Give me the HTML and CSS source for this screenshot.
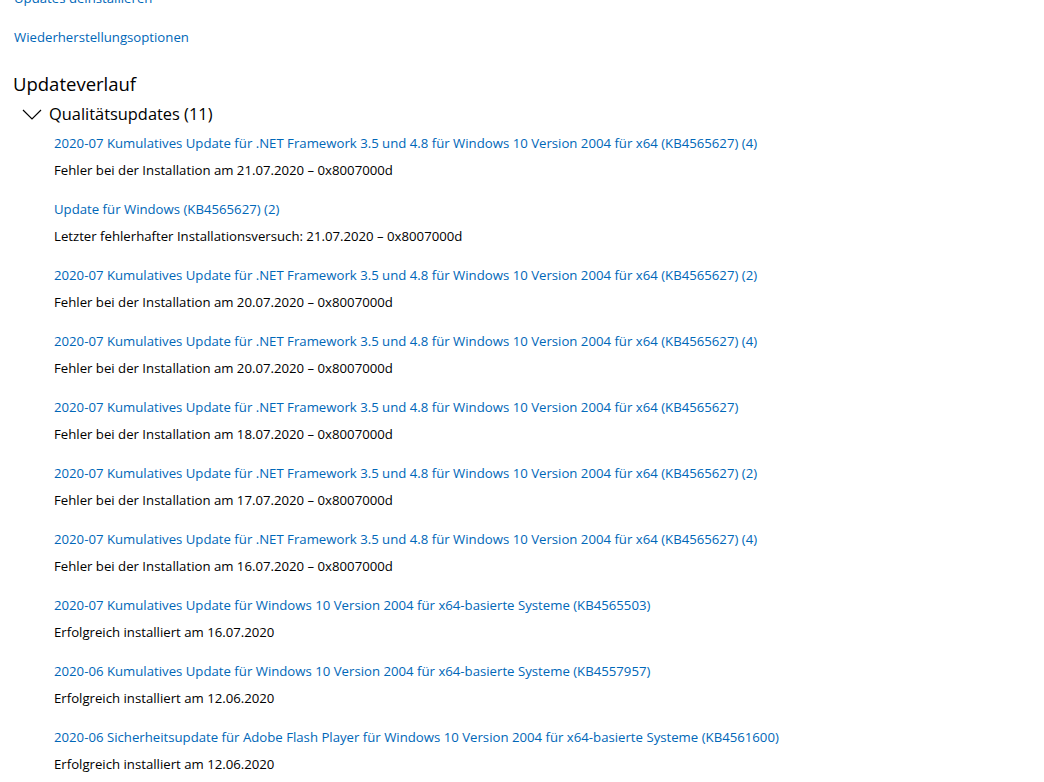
FILE: index.html
```html
<!DOCTYPE html>
<html lang="de">
<head>
    <meta charset="UTF-8">
    <title>Updateverlauf</title>
    <link rel="stylesheet" href="styles.css">
</head>
<body>
    <div class="page">
        <a href="#" class="top-link cut">Updates deinstallieren</a>
        <a href="#" class="top-link">Wiederherstellungsoptionen</a>

        <h1>Updateverlauf</h1>

        <div class="group">
            <div class="group-head">
                <svg class="chevron" width="20" height="11" viewBox="0 0 20 11">
                    <path d="M1 1 L10 10 L19 1" fill="none" stroke="#000" stroke-width="1.2"/>
                </svg>
                <span>Qualitätsupdates (11)</span>
            </div>

            <ul class="update-list">
                <li>
                    <a href="#">2020-07 Kumulatives Update für .NET Framework 3.5 und 4.8 für Windows 10 Version 2004 für x64 (KB4565627) (4)</a>
                    <p>Fehler bei der Installation am 21.07.2020 – 0x8007000d</p>
                </li>
                <li>
                    <a href="#">Update für Windows (KB4565627) (2)</a>
                    <p>Letzter fehlerhafter Installationsversuch: 21.07.2020 – 0x8007000d</p>
                </li>
                <li>
                    <a href="#">2020-07 Kumulatives Update für .NET Framework 3.5 und 4.8 für Windows 10 Version 2004 für x64 (KB4565627) (2)</a>
                    <p>Fehler bei der Installation am 20.07.2020 – 0x8007000d</p>
                </li>
                <li>
                    <a href="#">2020-07 Kumulatives Update für .NET Framework 3.5 und 4.8 für Windows 10 Version 2004 für x64 (KB4565627) (4)</a>
                    <p>Fehler bei der Installation am 20.07.2020 – 0x8007000d</p>
                </li>
                <li>
                    <a href="#">2020-07 Kumulatives Update für .NET Framework 3.5 und 4.8 für Windows 10 Version 2004 für x64 (KB4565627)</a>
                    <p>Fehler bei der Installation am 18.07.2020 – 0x8007000d</p>
                </li>
                <li>
                    <a href="#">2020-07 Kumulatives Update für .NET Framework 3.5 und 4.8 für Windows 10 Version 2004 für x64 (KB4565627) (2)</a>
                    <p>Fehler bei der Installation am 17.07.2020 – 0x8007000d</p>
                </li>
                <li>
                    <a href="#">2020-07 Kumulatives Update für .NET Framework 3.5 und 4.8 für Windows 10 Version 2004 für x64 (KB4565627) (4)</a>
                    <p>Fehler bei der Installation am 16.07.2020 – 0x8007000d</p>
                </li>
                <li>
                    <a href="#">2020-07 Kumulatives Update für Windows 10 Version 2004 für x64-basierte Systeme (KB4565503)</a>
                    <p>Erfolgreich installiert am 16.07.2020</p>
                </li>
                <li>
                    <a href="#">2020-06 Kumulatives Update für Windows 10 Version 2004 für x64-basierte Systeme (KB4557957)</a>
                    <p>Erfolgreich installiert am 12.06.2020</p>
                </li>
                <li>
                    <a href="#">2020-06 Sicherheitsupdate für Adobe Flash Player für Windows 10 Version 2004 für x64-basierte Systeme (KB4561600)</a>
                    <p>Erfolgreich installiert am 12.06.2020</p>
                </li>
            </ul>
        </div>
    </div>
</body>
</html>
```

FILE: styles.css
```css
* {
    margin: 0;
    padding: 0;
    box-sizing: border-box;
}

body {
    font-family: 'Open Sans', 'Noto Sans', sans-serif;
    font-size: 13.2px;
    color: #000;
    background-color: #fff;
    overflow: hidden;
}

.page {
    padding-left: 13px;
    margin-top: -12px;
}

.top-link {
    display: block;
    color: #0067b8;
    text-decoration: none;
    line-height: 20px;
    margin-left: 1px;
    margin-bottom: 21px;
}

.top-link.cut {
    margin-bottom: 19px;
}

h1 {
    font-weight: normal;
    font-size: 18.5px;
    line-height: 26px;
    margin-top: 24px;
}

.group-head {
    display: flex;
    align-items: center;
    height: 24px;
    font-size: 16.4px;
    margin-top: 4px;
}

.chevron {
    margin-left: 9px;
    margin-right: 7px;
    margin-top: 3px;
}

.update-list {
    list-style: none;
    padding-left: 41px;
    padding-top: 8px;
}

.update-list li {
    margin-bottom: 19px;
}

.update-list a {
    display: block;
    color: #0067b8;
    text-decoration: none;
    line-height: 20px;
    margin-bottom: 7px;
}

.update-list p {
    line-height: 20px;
}
```
